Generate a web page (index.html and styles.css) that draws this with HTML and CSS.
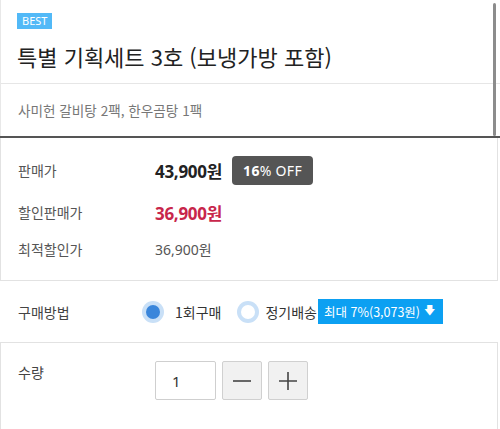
FILE: index.html
```html
<!DOCTYPE html>
<html lang="ko">
<head>
<meta charset="utf-8">
<link rel="stylesheet" href="styles.css">
</head>
<body>
<div class="page">
  <div class="head">
    <div class="top">
      <span class="best">BEST</span>
      <h1 class="title">특별 기획세트 3호 (보냉가방 포함)</h1>
    </div>
    <div class="sub">사미헌 갈비탕 2팩, 한우곰탕 1팩</div>
    <div class="scrollbar"></div>
  </div>
  <div class="thick"></div>
  <div class="prices">
    <div class="row r1">
      <span class="label">판매가</span>
      <span class="price">43,900원</span>
      <span class="off"><b>16</b>% OFF</span>
    </div>
    <div class="row r2">
      <span class="label">할인판매가</span>
      <span class="price red">36,900원</span>
    </div>
    <div class="row r3">
      <span class="label">최적할인가</span>
      <span class="normal">36,900원</span>
    </div>
  </div>
  <div class="method">
    <span class="mlabel">구매방법</span>
    <span class="radio on"><span class="dot"></span></span>
    <span class="opt">1회구매</span>
    <span class="radio"><span class="dot"></span></span>
    <span class="opt opt2">정기배송</span>
    <span class="save">최대 7%(3,073원) <span class="arrow">&#x1F847;</span></span>
  </div>
  <div class="qty">
    <span class="label qlabel">수량</span>
    <div class="input">1</div>
    <div class="btn">
      <svg width="20" height="20" viewBox="0 0 20 20"><path d="M1 10H19" stroke="#444" stroke-width="1.6"/></svg>
    </div>
    <div class="btn">
      <svg width="20" height="20" viewBox="0 0 20 20"><path d="M1 10H19M10 1V19" stroke="#444" stroke-width="1.6"/></svg>
    </div>
  </div>
</div>
</body>
</html>
```

FILE: styles.css
```css
html, body {
  margin: 0;
  padding: 0;
  background: #fff;
}
body {
  font-family: "Noto Sans", "Noto Sans CJK KR", sans-serif;
  color: #333;
  width: 500px;
  height: 429px;
  overflow: hidden;
}
.page {
  width: 498px;
}
.head {
  position: relative;
  border-left: 1px solid #e8e8e8;
}
.top {
  height: 84px;
  box-sizing: border-box;
  padding: 8px 16px 0;
  border-bottom: 1px solid #e6e6e6;
  width: 499px;
}
.best {
  display: inline-block;
  height: 16px;
  line-height: 16px;
  padding: 0 5px;
  background: #52b9f7;
  color: #fff;
  font-size: 11px;
  font-family: "Noto Sans", sans-serif;
}
.title {
  margin: 11px 0 0;
  font-size: 22px;
  line-height: 30px;
  font-weight: 400;
  color: #222;
  font-family: "Noto Sans CJK KR", sans-serif;
}
.sub {
  height: 52px;
  display: flex;
  align-items: center;
  padding-left: 17px;
  font-size: 13.6px;
  color: #777;
  font-family: "Noto Sans CJK KR", sans-serif;
}
.scrollbar {
  position: absolute;
  left: 492px;
  top: 3px;
  width: 3px;
  height: 133px;
  background: #8c8c8c;
  border-radius: 2px;
}
.thick {
  width: 500px;
  height: 2px;
  background: #555;
}
.prices {
  border: 1px solid #e2e2e2;
  border-top: none;
  padding: 12px 0 0 17px;
  height: 130px;
}
.row {
  display: flex;
  align-items: center;
}
.r1 { height: 40px; }
.r2 { height: 40px; margin-top: 2px; }
.r3 { height: 34px; }
.label {
  width: 137px;
  font-size: 14px;
  color: #555;
  font-family: "Noto Sans CJK KR", sans-serif;
}
.price {
  font-size: 17px;
  font-weight: 700;
  color: #222;
  letter-spacing: -0.3px;
}
.red {
  color: #c8264b;
}
.normal {
  font-size: 14px;
  color: #555;
}
.off {
  margin-left: 10px;
  height: 29px;
  width: 81px;
  box-sizing: border-box;
  display: flex;
  align-items: center;
  justify-content: center;
  background: #555;
  color: #fff;
  border-radius: 4px;
  font-size: 14px;
  letter-spacing: 0.3px;
}
.off b {
  font-weight: 700;
}
.method {
  height: 61px;
  display: flex;
  align-items: center;
  padding-left: 18px;
  font-family: "Noto Sans CJK KR", sans-serif;
}
.mlabel {
  width: 124px;
  font-size: 14px;
  color: #444;
}
.radio {
  width: 22px;
  height: 22px;
  box-sizing: border-box;
  border-radius: 50%;
  background: #c9e0f7;
  display: flex;
  align-items: center;
  justify-content: center;
}
.radio .dot {
  width: 14px;
  height: 14px;
  border-radius: 50%;
  background: #fff;
}
.radio.on .dot {
  background: #3a86db;
}
.opt {
  margin-left: 11px;
  margin-right: 16px;
  font-size: 14px;
  color: #333;
}
.opt2 {
  margin-left: 6px;
  margin-right: 1px;
}
.save {
  height: 25px;
  width: 125px;
  box-sizing: border-box;
  display: flex;
  align-items: center;
  padding-left: 6px;
  background: #0ca0f2;
  color: #fff;
  font-size: 12.5px;
  white-space: nowrap;
  margin-top: -1px;
}
.arrow {
  margin-left: 4px;
  font-size: 11px;
  font-family: "DejaVu Sans", sans-serif;
}
.qty {
  border: 1px solid #e2e2e2;
  border-bottom: none;
  height: 68px;
  padding: 18px 0 0 17px;
  display: flex;
  align-items: flex-start;
}
.qlabel {
  line-height: 22px;
  font-size: 14px;
  color: #444;
}
.input {
  width: 61px;
  height: 39px;
  box-sizing: border-box;
  border: 1px solid #cfcfcf;
  border-radius: 2px;
  padding-left: 16px;
  display: flex;
  align-items: center;
  font-size: 15px;
  color: #333;
}
.btn {
  margin-left: 6px;
  width: 40px;
  height: 39px;
  box-sizing: border-box;
  border: 1px solid #d0d0d0;
  border-radius: 2px;
  background: #f1f1f1;
  display: flex;
  align-items: center;
  justify-content: center;
}
```
